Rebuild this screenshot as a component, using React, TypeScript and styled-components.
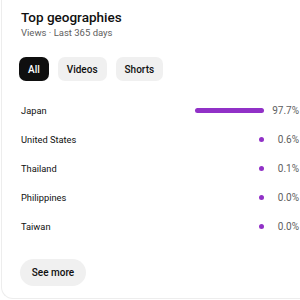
import styled, { createGlobalStyle } from 'styled-components';
import { useState } from 'react';

const GlobalStyle = createGlobalStyle`
  html, body {
    margin: 0;
    padding: 0;
    background: #ffffff;
    overflow: hidden;
  }
  body {
    font-family: Roboto, 'Liberation Sans', Arial, sans-serif;
    color: #0f0f0f;
  }
`;

type Geo = { name: string; value: number };

const geos: Geo[] = [
  { name: 'Japan', value: 97.7 },
  { name: 'United States', value: 0.6 },
  { name: 'Thailand', value: 0.1 },
  { name: 'Philippines', value: 0.0 },
  { name: 'Taiwan', value: 0.0 },
];

const tabs = ['All', 'Videos', 'Shorts'];

export default function App() {
  const [active, setActive] = useState<string>('All');

  return (
    <>
      <GlobalStyle />
      <Card>
        <Title>Top geographies</Title>
        <Subtitle>Views · Last 365 days</Subtitle>
        <Chips>
          {tabs.map((t) => (
            <Chip key={t} active={active === t} onClick={() => setActive(t)}>
              {t}
            </Chip>
          ))}
        </Chips>
        <List>
          {geos.map((g) => (
            <Row key={g.name}>
              <Name>{g.name}</Name>
              <BarTrack>
                <Bar style={{ width: `${Math.max(5, (g.value / 100) * 71)}px` }} />
              </BarTrack>
              <Percent>{g.value.toFixed(1)}%</Percent>
            </Row>
          ))}
        </List>
        <SeeMore type='button'>See more</SeeMore>
      </Card>
    </>
  );
}

const Card = styled.div`
  width: 299px;
  height: 311px;
  margin: -12px 0 0 1px;
  padding: 18px 0 0 19px;
  box-sizing: border-box;

  border: 1px solid #ededed;
  border-right: none;
  border-radius: 12px 0 0 12px;
  background: #ffffff;

  display: flex;
  flex-direction: column;
`;

const Title = styled.div`
  font-size: 13.5px;
  font-weight: 500;
  line-height: 20px;
  color: #0f0f0f;
`;

const Subtitle = styled.div`
  margin-top: -1px;
  font-size: 9.5px;
  line-height: 14px;
  color: #606060;
`;

const Chips = styled.div`
  margin-top: 17px;
  margin-left: -2px;
  display: flex;
  gap: 9px;
`;

const Chip = styled.button<{ active: boolean }>`
  height: 24px;
  padding: 0 9px;
  border: none;
  border-radius: 7px;
  background: ${(p) => (p.active ? '#0f0f0f' : '#f0f0f0')};
  color: ${(p) => (p.active ? '#ffffff' : '#0f0f0f')};
  font-family: Roboto, 'Liberation Sans', Arial, sans-serif;
  font-size: 10px;
  font-weight: 500;
  cursor: pointer;
`;

const List = styled.div`
  margin-top: 15px;
  width: 278px;
  display: flex;
  flex-direction: column;
`;

const Row = styled.div`
  height: 29px;
  display: flex;
  align-items: center;
`;

const Name = styled.div`
  flex: 1;
  font-size: 9.3px;
  color: #0f0f0f;
`;

const BarTrack = styled.div`
  width: 71px;
  display: flex;
  justify-content: flex-end;
`;

const Bar = styled.div`
  height: 5px;
  border-radius: 3px;
  background: #9131c7;
`;

const Percent = styled.div`
  width: 35px;
  text-align: right;
  font-size: 10px;
  color: #606060;
`;

const SeeMore = styled.button`
  margin: 18px 0 0 -1px;
  width: 66px;
  height: 27px;
  border: none;
  border-radius: 14px;
  background: #f0f0f0;
  color: #0f0f0f;
  font-family: Roboto, 'Liberation Sans', Arial, sans-serif;
  font-size: 10px;
  font-weight: 500;
  padding: 0;
  cursor: pointer;
`;
